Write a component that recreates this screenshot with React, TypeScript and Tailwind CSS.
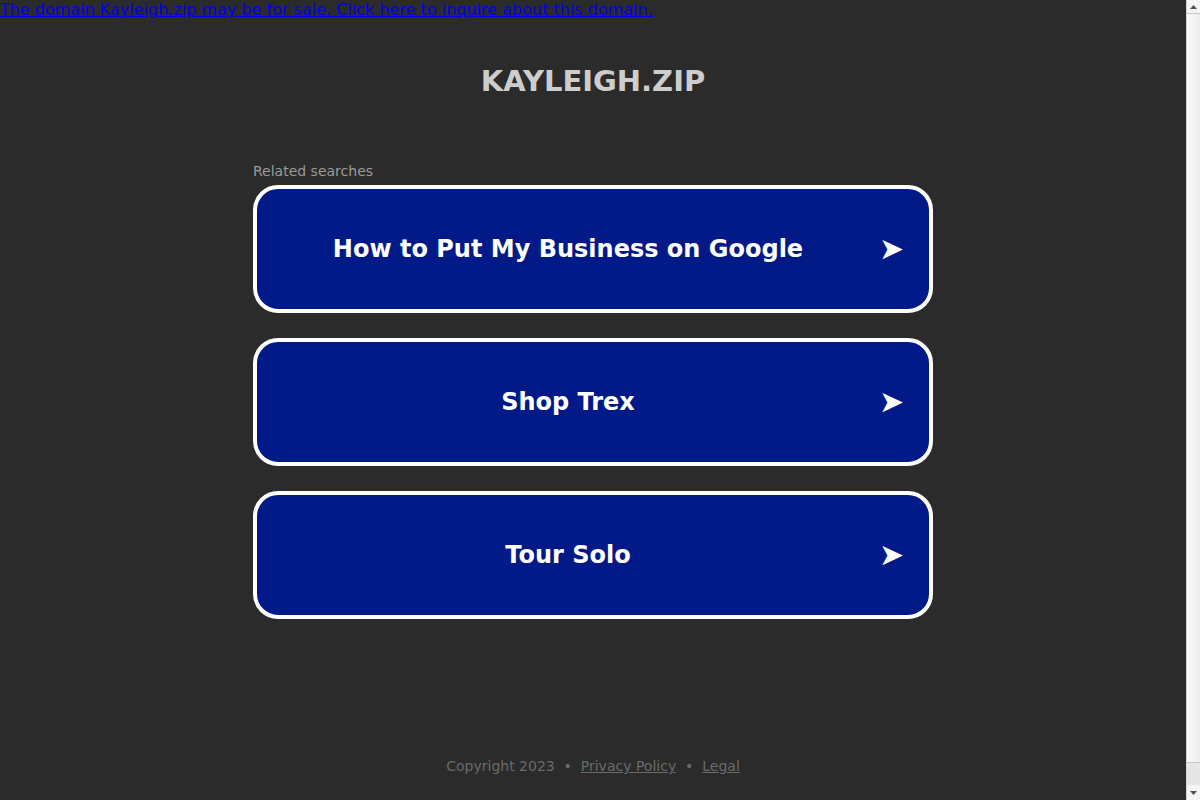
import React from "react";

const searches = ["How to Put My Business on Google", "Shop Trex", "Tour Solo"];

// page chrome: the browser's scrollbar, shown as an overlay on the right edge
function Scrollbar() {
  return (
    <div className="fixed right-0 top-0 flex h-[800px] w-[14px] flex-col border-l border-[#d6d6d6] bg-[#e6e6e6]">
      <div className="flex h-[13px] items-center justify-center bg-[#f4f4f4]">
        <svg width="7" height="4" viewBox="0 0 7 4">
          <path d="M3.5 0 L7 4 L0 4 Z" fill="#505050" />
        </svg>
      </div>
      <div className="h-[750px] border-y border-[#c8c8c8] bg-gradient-to-r from-[#fafafa] to-[#ededed]" />
      <div className="flex-1" />
      <div className="flex h-[15px] items-center justify-center bg-[#f4f4f4]">
        <svg width="7" height="4" viewBox="0 0 7 4">
          <path d="M0 0 L7 0 L3.5 4 Z" fill="#505050" />
        </svg>
      </div>
    </div>
  );
}

export default function App() {
  return (
    <div className="min-h-[800px] w-[1186px] bg-[#2b2b2b] flex flex-col font-['DejaVu_Sans',sans-serif]">
      <a href="#" className="text-[16px] leading-[19px] text-[#0000ee] underline">
        The domain Kayleigh.zip may be for sale. Click here to inquire about this domain.
      </a>
      <h1 className="mt-[45px] text-center text-[29px] leading-[35px] font-bold text-[#cdcdcd]">
        KAYLEIGH.ZIP
      </h1>
      <div className="mx-auto mt-[64px] w-[680px]">
        <div className="text-[14px] leading-[17px] text-[#9a9a9a]">Related searches</div>
        <div className="mt-[5px] flex flex-col gap-[25px]">
          {searches.map((s) => (
            <a
              key={s}
              href="#"
              className="flex h-[128px] items-center rounded-[25px] border-4 border-white bg-[#011a87] pr-[26px]"
            >
              <span className="flex-1 text-center text-[24px] font-bold text-white">{s}</span>
              <span className="w-[24px] text-[30px] leading-[30px] text-white">➤</span>
            </a>
          ))}
        </div>
      </div>
      <div className="mt-[139px] text-center text-[14px] leading-[17px] text-[#6a6a6a]">
        Copyright 2023 &nbsp;•&nbsp; <a href="#" className="underline">Privacy Policy</a> &nbsp;•&nbsp;{" "}
        <a href="#" className="underline">Legal</a>
      </div>
      <Scrollbar />
    </div>
  );
}
